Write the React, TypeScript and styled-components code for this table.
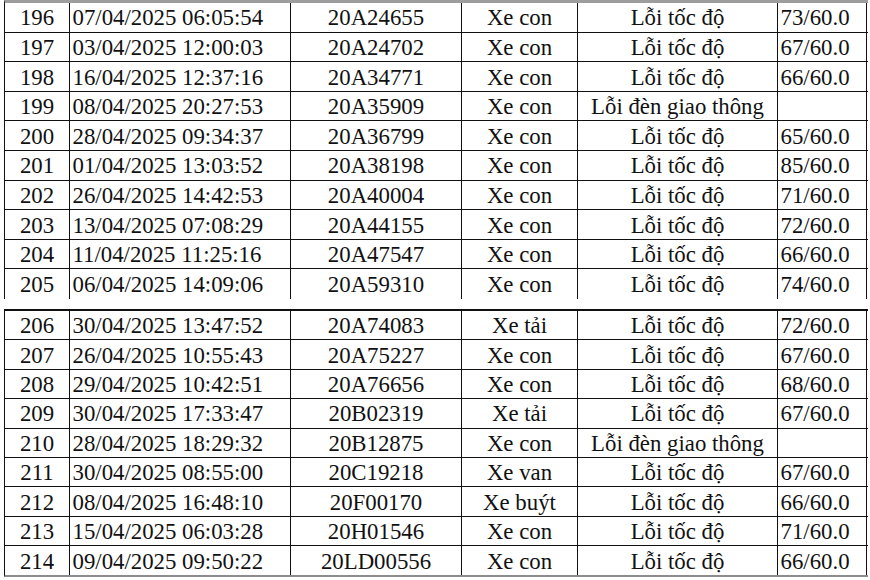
import { createGlobalStyle } from "styled-components";
import styled from "styled-components";

interface Violation {
  no: number;
  time: string;
  plate: string;
  vehicle: string;
  error: string;
  speed?: string;
}

const firstPart: Violation[] = [
  { no: 196, time: "07/04/2025 06:05:54", plate: "20A24655", vehicle: "Xe con", error: "Lỗi tốc độ", speed: "73/60.0" },
  { no: 197, time: "03/04/2025 12:00:03", plate: "20A24702", vehicle: "Xe con", error: "Lỗi tốc độ", speed: "67/60.0" },
  { no: 198, time: "16/04/2025 12:37:16", plate: "20A34771", vehicle: "Xe con", error: "Lỗi tốc độ", speed: "66/60.0" },
  { no: 199, time: "08/04/2025 20:27:53", plate: "20A35909", vehicle: "Xe con", error: "Lỗi đèn giao thông" },
  { no: 200, time: "28/04/2025 09:34:37", plate: "20A36799", vehicle: "Xe con", error: "Lỗi tốc độ", speed: "65/60.0" },
  { no: 201, time: "01/04/2025 13:03:52", plate: "20A38198", vehicle: "Xe con", error: "Lỗi tốc độ", speed: "85/60.0" },
  { no: 202, time: "26/04/2025 14:42:53", plate: "20A40004", vehicle: "Xe con", error: "Lỗi tốc độ", speed: "71/60.0" },
  { no: 203, time: "13/04/2025 07:08:29", plate: "20A44155", vehicle: "Xe con", error: "Lỗi tốc độ", speed: "72/60.0" },
  { no: 204, time: "11/04/2025 11:25:16", plate: "20A47547", vehicle: "Xe con", error: "Lỗi tốc độ", speed: "66/60.0" },
  { no: 205, time: "06/04/2025 14:09:06", plate: "20A59310", vehicle: "Xe con", error: "Lỗi tốc độ", speed: "74/60.0" },
];

const secondPart: Violation[] = [
  { no: 206, time: "30/04/2025 13:47:52", plate: "20A74083", vehicle: "Xe tải", error: "Lỗi tốc độ", speed: "72/60.0" },
  { no: 207, time: "26/04/2025 10:55:43", plate: "20A75227", vehicle: "Xe con", error: "Lỗi tốc độ", speed: "67/60.0" },
  { no: 208, time: "29/04/2025 10:42:51", plate: "20A76656", vehicle: "Xe con", error: "Lỗi tốc độ", speed: "68/60.0" },
  { no: 209, time: "30/04/2025 17:33:47", plate: "20B02319", vehicle: "Xe tải", error: "Lỗi tốc độ", speed: "67/60.0" },
  { no: 210, time: "28/04/2025 18:29:32", plate: "20B12875", vehicle: "Xe con", error: "Lỗi đèn giao thông" },
  { no: 211, time: "30/04/2025 08:55:00", plate: "20C19218", vehicle: "Xe van", error: "Lỗi tốc độ", speed: "67/60.0" },
  { no: 212, time: "08/04/2025 16:48:10", plate: "20F00170", vehicle: "Xe buýt", error: "Lỗi tốc độ", speed: "66/60.0" },
  { no: 213, time: "15/04/2025 06:03:28", plate: "20H01546", vehicle: "Xe con", error: "Lỗi tốc độ", speed: "71/60.0" },
  { no: 214, time: "09/04/2025 09:50:22", plate: "20LD00556", vehicle: "Xe con", error: "Lỗi tốc độ", speed: "66/60.0" },
];

const serif = `"Liberation Serif", "Times New Roman", serif`;

const GlobalStyle = createGlobalStyle`
  html, body {
    margin: 0;
    padding: 0;
    background: #fff;
  }
  body {
    font-family: ${serif};
    color: #111;
  }
`;

const Sheet = styled.div`
  width: 870px;
  height: 580px;
  overflow: hidden;
  box-sizing: border-box;
  padding: 0 2px 0 4px;
  display: flex;
  flex-direction: column;
  gap: 10px;
`;

const Section = styled.div<{ $part: "top" | "bottom" }>`
  border-left: 1.5px solid #111;
  border-top: ${(p) => (p.$part === "top" ? "3px solid #9d9d9d" : "2px solid #111")};
  border-bottom: ${(p) => (p.$part === "top" ? "none" : "2px solid #8c8c8c")};
`;

const Row = styled.div<{ $height: number; $last: boolean }>`
  display: grid;
  grid-template-columns: 65px 221px 171px 116px 200px 89px;
  height: ${(p) => p.$height}px;
  box-sizing: border-box;
  border-bottom: ${(p) => (p.$last ? "none" : "1.5px solid #111")};
`;

const Cell = styled.div<{ $align?: "left" | "center" }>`
  display: flex;
  align-items: center;
  justify-content: ${(p) => (p.$align === "left" ? "flex-start" : "center")};
  padding-left: ${(p) => (p.$align === "left" ? "2.5px" : "0")};
  padding-top: 3px;
  border-right: 1.5px solid #111;
  font-family: ${serif};
  font-size: 22.8px;
  line-height: 1;
  color: #111;
  white-space: nowrap;
  overflow: hidden;
`;

function Part({ rows, part }: { rows: Violation[]; part: "top" | "bottom" }) {
  const h = part === "top" ? 29.6 : 29.4;
  return (
    <Section $part={part}>
      {rows.map((r, i) => (
        <Row key={r.no} $height={h} $last={i === rows.length - 1}>
          <Cell>{r.no}</Cell>
          <Cell $align="left">{r.time}</Cell>
          <Cell>{r.plate}</Cell>
          <Cell>{r.vehicle}</Cell>
          <Cell>{r.error}</Cell>
          <Cell $align="left">{r.speed ?? ""}</Cell>
        </Row>
      ))}
    </Section>
  );
}

export default function App() {
  return (
    <>
      <GlobalStyle />
      <Sheet>
        <Part rows={firstPart} part="top" />
        <Part rows={secondPart} part="bottom" />
      </Sheet>
    </>
  );
}
